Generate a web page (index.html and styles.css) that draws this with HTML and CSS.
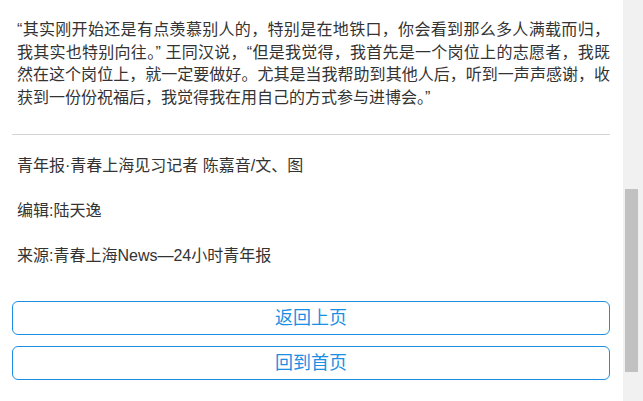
FILE: index.html
```html
<!DOCTYPE html>
<html>
<head>
    <meta charset="UTF-8">
    <title>青春上海</title>
    <link rel="stylesheet" href="styles.css">
</head>
<body>
<div class="wrap">
    <div class="page">
        <div class="article">
            <p class="text">“其实刚开始还是有点羡慕别人的，特别是在地铁口，你会看到那么多人满载而归，我其实也特别向往。” 王同汉说，“但是我觉得，我首先是一个岗位上的志愿者，我既然在这个岗位上，就一定要做好。尤其是当我帮助到其他人后，听到一声声感谢，收获到一份份祝福后，我觉得我在用自己的方式参与进博会。”</p>
        </div>
        <div class="info">
            <p>青年报·青春上海见习记者 陈嘉音/文、图</p>
            <p>编辑:陆天逸</p>
            <p>来源:青春上海News—24小时青年报</p>
        </div>
        <div class="btns">
            <a href="javascript:;" class="btn">返回上页</a>
            <a href="javascript:;" class="btn">回到首页</a>
        </div>
    </div>
    <div class="scroll">
        <div class="thumb"></div>
    </div>
</div>
</body>
</html>
```

FILE: styles.css
```css
body, div, p, a {
    margin: 0;
    padding: 0;
}

body {
    background: #fff;
    font-family: "Liberation Sans", "Noto Sans CJK SC", sans-serif;
    color: #333;
    overflow: hidden;
}

a {
    text-decoration: none;
}

.wrap {
    display: flex;
    height: 401px;
}

/*正文*/
.page {
    flex: 1;
    padding: 0 13px 0 12px;
}

.article {
    padding: 19px 0 25px 5px;
    border-bottom: 1px solid #d4d4d4;
}

.article .text {
    font-size: 16px;
    line-height: 22.5px;
    text-align: justify;
}

/*作者信息*/
.info {
    padding-left: 5px;
}

.info p {
    font-size: 16px;
    line-height: 29px;
    margin: 16px 0;
}

/*按钮*/
.btns {
    display: flex;
    flex-direction: column;
    gap: 11px;
    padding-top: 15px;
}

.btn {
    display: block;
    height: 32px;
    line-height: 32px;
    border: 1px solid #1b8fe3;
    border-radius: 6px;
    text-align: center;
    font-size: 18px;
    color: #1b8fe3;
}

/*滚动条*/
.scroll {
    width: 20px;
    background: #f1f1f1;
}

.scroll .thumb {
    margin: 189px 0 0 2px;
    width: 13px;
    height: 183px;
    background: #c1c1c1;
}
```
